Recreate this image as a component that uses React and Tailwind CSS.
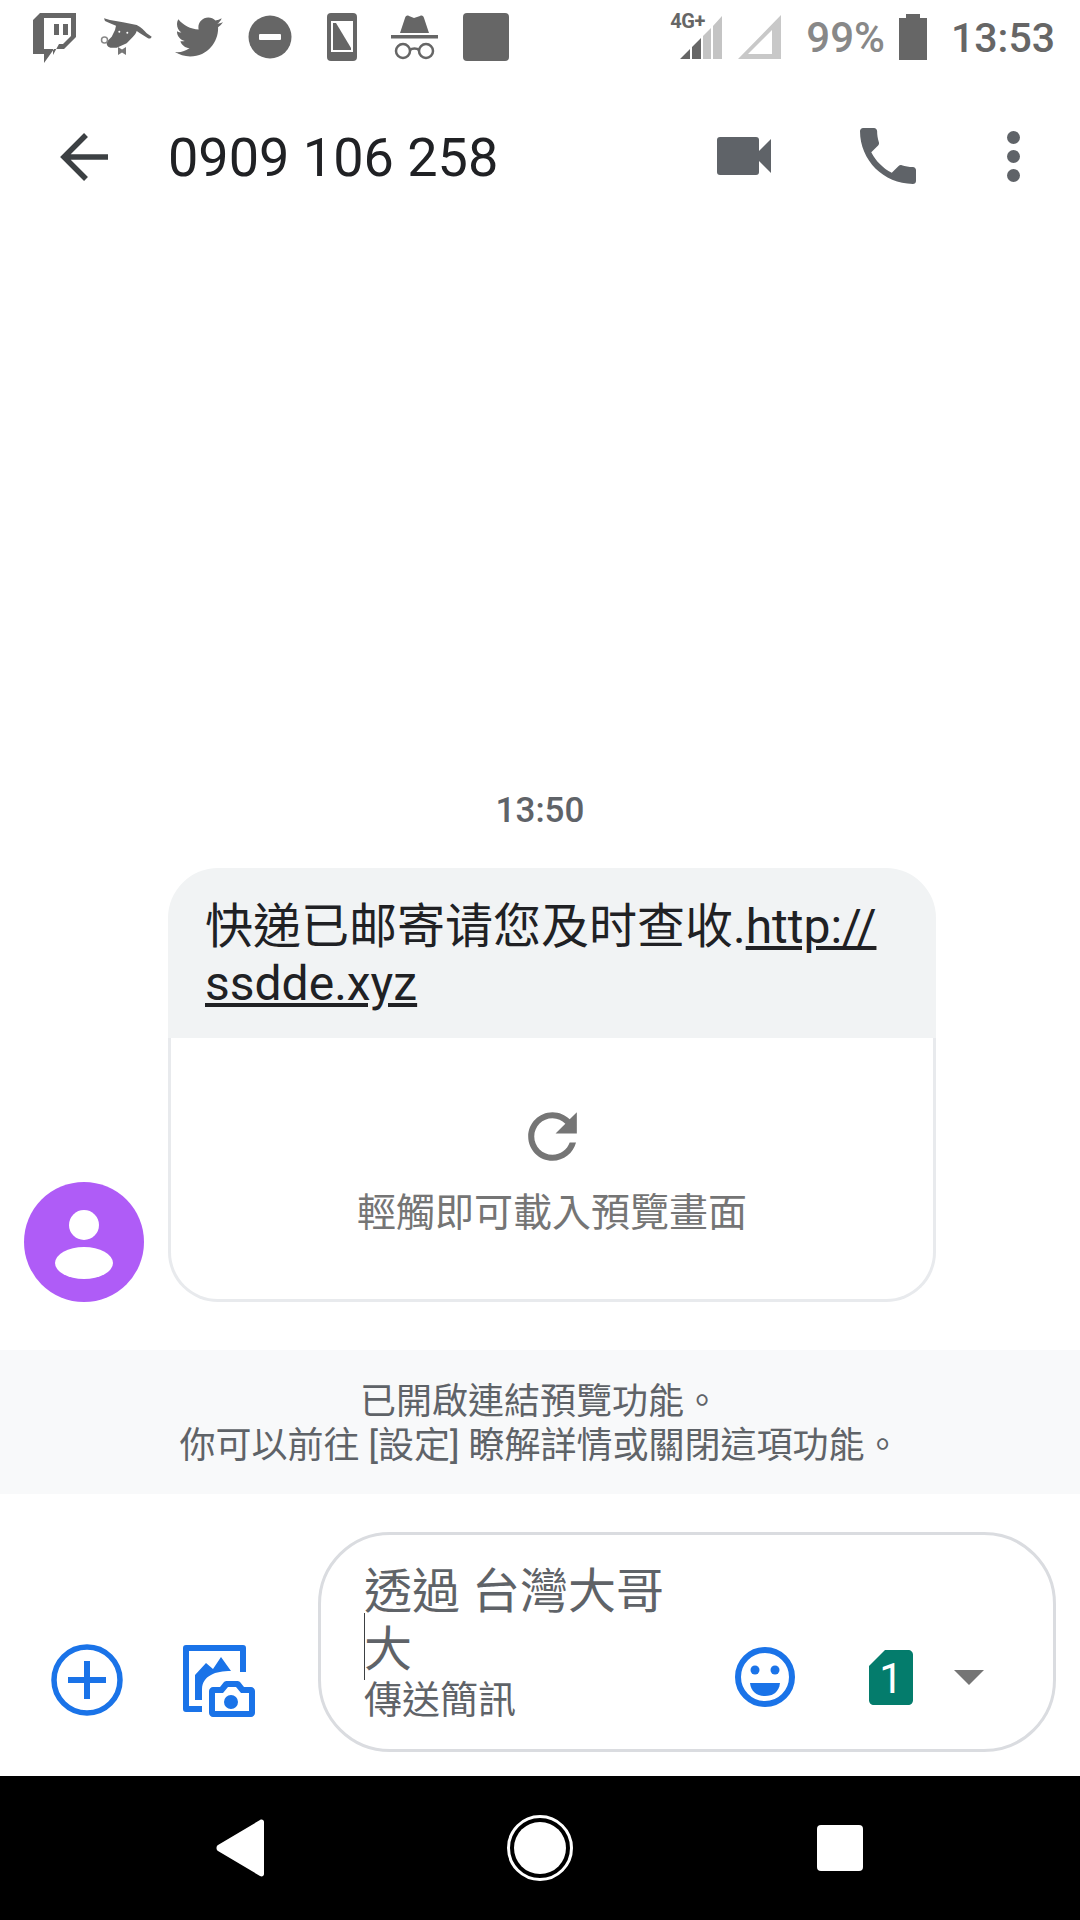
import React from "react";
import { FaTwitter } from "react-icons/fa";

const cjk = "font-['Roboto','Noto_Sans_CJK_TC',sans-serif]";

function TwitchIcon() {
  return (
    <svg width="43" height="50" viewBox="0 0 43 50" className="ml-[33px] mt-[13px] shrink-0">
      <path
        fillRule="evenodd"
        fill="#666"
        d="M7 0H43V24L31 36H21L11 50V41H0V7ZM11 5V36H20V42L26 31H30L38 23V5ZM21 11H26V22H21ZM30 11H35V22H30Z"
      />
    </svg>
  );
}

function SharkIcon() {
  return (
    <svg width="52" height="40" viewBox="0 0 52 40" className="ml-[24px] mt-[17px] shrink-0">
      <path
        fill="#666"
        d="M4 1.300L10 3L23 5.300L36.700 8C41 10 44 13 46.700 16.300L51.700 19.700C51 21.500 49.500 21.800 48 21.300L40 16.300L36.700 14C36 16 35 18 33 19.700L26.700 26.300L16.700 30.700C13 31 10 31 8.300 29.700C6.500 28 6.500 26 6.700 24.700L11.700 19.700L15 13L16 8.700L10 6.300L5 4Z"
      />
      <circle cx="19.300" cy="14.700" r="1" fill="#fff" />
      <circle cx="27.300" cy="15.700" r="1" fill="#fff" />
      <circle cx="4.500" cy="23" r="3" fill="#fff" stroke="#888" strokeWidth="1.500" />
      <path fill="#777" d="M18 30L22 32.500L26 30V38L22 35.500L18 38Z" />
    </svg>
  );
}

function IncognitoIcon() {
  return (
    <svg width="47" height="46" viewBox="0 0 47 46" className="ml-[34px] mt-[15px] shrink-0">
      <path fill="#666" d="M9 18L14 3C14.500 1 16 0 18 1L23 3L29 1C31 0 32.500 1 33 3L38 18Z" />
      <rect x="0" y="20" width="47" height="3.500" fill="#666" />
      <circle cx="12" cy="36" r="7" fill="none" stroke="#666" strokeWidth="2.500" />
      <circle cx="35" cy="36" r="7" fill="none" stroke="#666" strokeWidth="2.500" />
      <path d="M19 35C21 33 26 33 28 35" fill="none" stroke="#666" strokeWidth="2.500" />
    </svg>
  );
}

function StatusBar() {
  return (
    <div className="flex h-[72px] shrink-0 items-start">
      <TwitchIcon />
      <SharkIcon />
      <FaTwitter className="ml-[23px] mt-[13px] shrink-0 text-[48px] text-[#666]" />
      <svg width="44" height="44" viewBox="0 0 44 44" className="ml-[25px] mt-[15px] shrink-0">
        <circle cx="22" cy="22" r="21.500" fill="#666" />
        <rect x="11" y="19" width="22" height="6" rx="1" fill="#fff" />
      </svg>
      <svg width="30" height="48" viewBox="0 0 30 48" className="ml-[35px] mt-[13px] shrink-0">
        <rect width="30" height="48" rx="4" fill="#666" />
        <rect x="4" y="8" width="22" height="31" fill="#fff" />
        <path d="M6 10H9L24 35V37H6Z" fill="#666" />
      </svg>
      <IncognitoIcon />
      <div className="ml-[25px] mt-[13px] h-[48px] w-[46px] shrink-0 rounded-[4px] bg-[#666]" />
      <div className="flex-1" />
      <div className="relative mt-[15px] h-[44px] w-[52px] shrink-0">
        <svg width="42" height="44" viewBox="0 0 42 44" className="absolute left-[10px] top-0">
          <path fill="#666" d="M0 44L10 34V44ZM12 32L21 23V44H12Z" />
          <path fill="#c4c4c4" d="M23 21L31 13V44H23ZM33 11L42 1V44H33Z" />
        </svg>
        <span className="absolute left-0 top-[-4px] font-['Roboto'] text-[20px] font-bold leading-[20px] tracking-[-0.5px] text-[#666]">
          4G+
        </span>
      </div>
      <svg width="43" height="44" viewBox="0 0 43 44" className="ml-[16px] mt-[15px] shrink-0">
        <path fillRule="evenodd" fill="#c8c8c8" d="M43 0V44H0ZM34 15L10 39H34Z" />
      </svg>
      <span className="ml-[25px] mt-[13px] font-['Roboto'] text-[42px] font-medium leading-[50px] text-[#888]">
        99%
      </span>
      <svg width="28" height="46" viewBox="0 0 28 46" className="ml-[14px] mt-[14px] shrink-0">
        <path fill="#666" d="M7 0H21V4H28V46H0V4H7Z" />
      </svg>
      <span className="ml-[24px] mr-[25px] mt-[13px] font-['Roboto'] text-[41px] font-medium leading-[50px] text-[#666]">
        13:53
      </span>
    </div>
  );
}

function Header() {
  return (
    <div className="flex h-[171px] shrink-0 items-center">
      <svg width="48" height="50" viewBox="0 0 48 50" className="mb-[2px] ml-[60px] shrink-0">
        <path d="M48 25H5M26 3L4 25L26 47" fill="none" stroke="#3c4043" strokeWidth="5.500" />
      </svg>
      <h1 className="ml-[60px] font-['Roboto'] text-[54px] font-normal leading-none text-[#202124]">
        0909 106 258
      </h1>
      <div className="flex-1" />
      <svg width="54" height="38" viewBox="0 0 54 38" className="mb-[4px] shrink-0">
        <rect width="42" height="38" rx="3" fill="#5f6368" />
        <path d="M42 14L54 2V36L42 24Z" fill="#5f6368" />
      </svg>
      <svg width="56" height="56" viewBox="3 3 18 18" className="mb-[3px] ml-[89px] shrink-0">
        <path
          fill="#5f6368"
          d="M6.620 10.790c1.440 2.830 3.760 5.140 6.590 6.590l2.200-2.200c.270-.270.670-.360 1.020-.240 1.120.370 2.330.570 3.570.570.550 0 1 .450 1 1V20c0 .550-.450 1-1 1-9.390 0-17-7.610-17-17 0-.550.450-1 1-1h3.500c.550 0 1 .450 1 1 0 1.250.200 2.450.570 3.570.110.350.030.740-.250 1.020l-2.200 2.200z"
        />
      </svg>
      <div className="mb-[3px] ml-[91px] mr-[60px] flex shrink-0 flex-col gap-[6px]">
        <div className="h-[13px] w-[13px] rounded-full bg-[#5f6368]" />
        <div className="h-[13px] w-[13px] rounded-full bg-[#5f6368]" />
        <div className="h-[13px] w-[13px] rounded-full bg-[#5f6368]" />
      </div>
    </div>
  );
}

function Avatar() {
  return (
    <svg width="120" height="120" viewBox="0 0 120 120" className="shrink-0">
      <circle cx="60" cy="60" r="60" fill="#af5cf7" />
      <ellipse cx="60" cy="43" rx="15" ry="15" fill="#fff" />
      <ellipse cx="60" cy="81" rx="29" ry="16" fill="#fff" />
    </svg>
  );
}

function MessageCard() {
  return (
    <div className="flex w-[768px] flex-col">
      <div className={`h-[170px] rounded-t-[50px] bg-[#f1f3f4] pl-[37px] pt-[30px] text-[48px] leading-[57px] text-[#202124] ${cjk}`}>
        快递已邮寄请您及时查收.<span className="underline">http://</span>
        <br />
        <span className="underline">ssdde.xyz</span>
      </div>
      <div className="flex h-[264px] flex-col items-center rounded-b-[50px] border-x-[3px] border-b-[3px] border-[#e8eaed] bg-white pt-[72px]">
        <svg width="73" height="73" viewBox="0 0 24 24" className="mt-[-10px]">
          <path
            fill="#757575"
            d="M17.650 6.350C16.200 4.900 14.210 4 12 4c-4.420 0-7.990 3.580-7.990 8s3.570 8 7.990 8c3.730 0 6.840-2.550 7.730-6h-2.080c-.820 2.330-3.040 4-5.650 4-3.310 0-6-2.690-6-6s2.690-6 6-6c1.660 0 3.140.690 4.220 1.780L13 11h7V4l-2.350 2.350z"
          />
        </svg>
        <p className={`mt-[16px] text-[39px] leading-[48px] text-[#757575] ${cjk}`}>輕觸即可載入預覽畫面</p>
      </div>
    </div>
  );
}

function Composer() {
  return (
    <div className="flex h-[282px] shrink-0 items-start pt-[38px]">
      <svg width="72" height="74" viewBox="0 0 72 74" className="ml-[51px] mt-[111px] shrink-0">
        <circle cx="36" cy="37" r="33" fill="none" stroke="#1a73e8" strokeWidth="5.500" />
        <path d="M36 18V56M17 37H55" fill="none" stroke="#1a73e8" strokeWidth="6" />
      </svg>
      <svg width="72" height="72" viewBox="0 0 72 72" className="ml-[60px] mt-[113px] shrink-0">
        <path
          fill="#1a73e8"
          d="M3 0H60a3 3 0 0 1 3 3V27H57V6H6V61H19V67H3a3 3 0 0 1-3-3V3a3 3 0 0 1 3-3Z"
        />
        <path fill="#1a73e8" d="M12 55V30L23 18L30 24L38 12L48 26C40 26 33 27 28 30C22 33 19 38 19 44V55Z" />
        <path
          fillRule="evenodd"
          fill="#1a73e8"
          d="M37 42L41 37C42 36 43 36 44 36H54C55 36 56 36 57 37L61 42H68C70 42 72 44 72 46V68C72 70 70 72 68 72H30C28 72 26 70 26 68V46C26 44 28 42 30 42ZM32 48V66H66V48H58L53 42H45L40 48ZM48 50A7 7 0 1 1 48 64A7 7 0 1 1 48 50Z"
        />
      </svg>
      <div className="ml-[63px] flex h-[220px] w-[738px] shrink-0 rounded-[72px] border-[3px] border-[#dadce0] pl-[43px]">
        <div className={`relative w-[310px] pt-[28px] text-[#5f6368] ${cjk}`}>
          <p className="text-[48px] leading-[58px]">透過 台灣大哥</p>
          <p className="text-[48px] leading-[58px]">大</p>
          <p className="mt-[-2px] text-[38px] leading-[46px]">傳送簡訊</p>
          <div className="absolute left-0 top-[78px] h-[67px] w-px bg-[#3c4043]" />
        </div>
        <div className="flex flex-1 items-start pt-[111px]">
          <svg width="60" height="62" viewBox="0 0 60 62" className="ml-[61px] shrink-0">
            <circle cx="30" cy="31" r="27" fill="none" stroke="#1a73e8" strokeWidth="6" />
            <circle cx="20" cy="24" r="4.500" fill="#1a73e8" />
            <circle cx="40" cy="24" r="4.500" fill="#1a73e8" />
            <path d="M15 37H45C44 46 38 50 30 50C22 50 16 46 15 37Z" fill="#1a73e8" />
          </svg>
          <div className="relative ml-[74px] mt-[4px] h-[55px] w-[44px] shrink-0">
            <svg width="44" height="55" viewBox="0 0 44 55" className="absolute inset-0">
              <path d="M16 0H39C42 0 44 2 44 5V50C44 53 42 55 39 55H5C2 55 0 53 0 50V16Z" fill="#047c6c" />
            </svg>
            <span className="absolute inset-0 flex items-center justify-center pt-[2px] font-['Roboto'] text-[42px] leading-none text-white">
              1
            </span>
          </div>
          <svg width="30" height="15" viewBox="0 0 30 15" className="ml-[41px] mt-[24px] shrink-0">
            <path d="M0 0H30L15 15Z" fill="#757575" />
          </svg>
        </div>
      </div>
    </div>
  );
}

function NavBar() {
  return (
    <div className="flex h-[144px] shrink-0 items-center bg-black">
      <svg width="48" height="58" viewBox="0 0 48 58" className="ml-[216px] shrink-0">
        <path d="M2 26L44 1C46 0 48 1 48 3V55C48 57 46 58 44 57L2 32C0 31 0 27 2 26Z" fill="#fff" />
      </svg>
      <div className="ml-[243px] flex h-[66px] w-[66px] shrink-0 items-center justify-center rounded-full border-[3px] border-white">
        <div className="h-[52px] w-[52px] rounded-full bg-white" />
      </div>
      <div className="ml-[244px] h-[46px] w-[46px] shrink-0 rounded-[4px] bg-white" />
    </div>
  );
}

export default function App() {
  return (
    <div className="flex h-[1920px] w-[1080px] flex-col overflow-hidden bg-white">
      <StatusBar />
      <Header />
      <main className="flex flex-1 flex-col justify-end">
        <p className="text-center font-['Roboto'] text-[35px] font-medium leading-[40px] text-[#5f6368]">13:50</p>
        <div className="mt-[37px] flex items-end pl-[24px]">
          <Avatar />
          <div className="ml-[24px]">
            <MessageCard />
          </div>
        </div>
        <div className={`mt-[48px] flex h-[144px] flex-col items-center justify-center bg-[#f8f9fa] pt-[3px] text-[36px] leading-[44px] text-[#5f6368] ${cjk}`}>
          <p>已開啟連結預覽功能。</p>
          <p>你可以前往 [設定] 瞭解詳情或關閉這項功能。</p>
        </div>
      </main>
      <Composer />
      <NavBar />
    </div>
  );
}
